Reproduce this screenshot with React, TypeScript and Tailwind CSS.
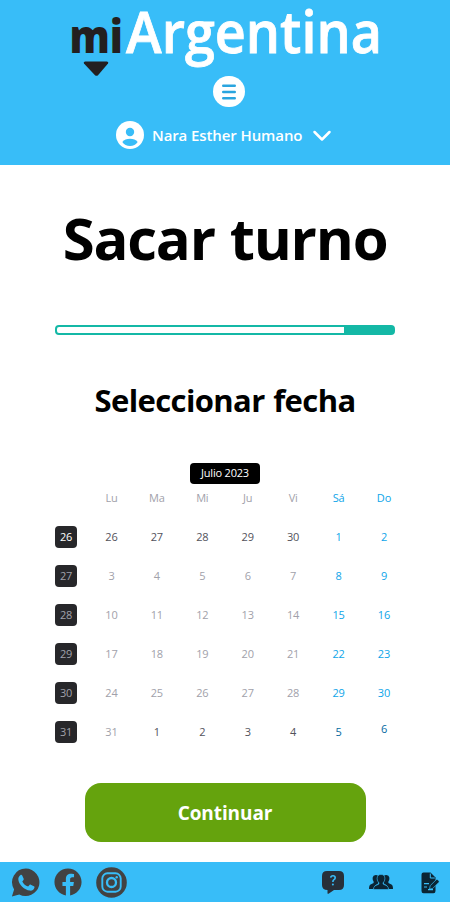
import React from 'react';
import { FaFacebook } from 'react-icons/fa';

const dayNames = ['Lu', 'Ma', 'Mi', 'Ju', 'Vi', 'Sá', 'Do'];
const weeks = [
  { n: 26, days: [26, 27, 28, 29, 30, 1, 2] },
  { n: 27, days: [3, 4, 5, 6, 7, 8, 9] },
  { n: 28, days: [10, 11, 12, 13, 14, 15, 16] },
  { n: 29, days: [17, 18, 19, 20, 21, 22, 23] },
  { n: 30, days: [24, 25, 26, 27, 28, 29, 30] },
  { n: 31, days: [31, 1, 2, 3, 4, 5, 6] },
];

function dayColor(week: number, col: number) {
  if (week === 5 && col > 4) return 'text-[#0369a1]';
  if (col > 4) return 'text-[#0ea5e9]';
  if (week === 0 || (week === 5 && col > 0)) return 'text-[#52525b]';
  return 'text-[#a1a1aa]';
}

function Logo() {
  return (
    <svg width="318" height="76" viewBox="0 0 318 76" className="block overflow-visible" fontFamily="'Open Sans', 'Noto Sans', sans-serif">
      <text x="3.500" y="52.500" fontSize="46" fontWeight="800" fill="#231f20" textLength="53.500" lengthAdjust="spacingAndGlyphs">mi</text>
      <text x="60" y="52.500" fontSize="58" fontWeight="600" fill="#fff" stroke="#fff" strokeWidth="0.800" textLength="256" lengthAdjust="spacingAndGlyphs">Argentina</text>
      <path d="M19 61.500h22q2 .3 1 2L32 75.200q-1.500 1.200-3 0L18 63.500q-1-1.700 1-2z" fill="#231f20" />
    </svg>
  );
}

function UserIcon() {
  return (
    <svg width="28" height="28" viewBox="0 0 28 28" className="shrink-0">
      <circle cx="14" cy="14" r="14" fill="#fff" />
      <circle cx="14" cy="11" r="4.200" fill="#38bdf8" />
      <path d="M6.300 21Q9 17.800 14 17.800t7.700 3.200Q19 25 14 25t-7.700-4z" fill="#38bdf8" />
    </svg>
  );
}

function WhatsappIcon() {
  return (
    <svg width="29" height="29" viewBox="0 0 29 29">
      <path d="M14.800.6a13.700 13.700 0 1 1-6.500 25.800L.9 28.600l2.200-7.200A13.700 13.700 0 0 1 14.800.6z" fill="#424242" />
      <path d="M9.300 7.200c.6-.5 1.500-.5 1.900.2l1.500 3.300c.2.600 0 1-.4 1.500l-1 1.200c1.300 2.500 3.200 4.200 5.800 5.200l1.400-1.700c.4-.4.8-.5 1.300-.2l3.100 1.500c.6.300.7.700.5 1.500-.6 2.100-2.300 3.100-4.500 2.900C13.500 22 7.600 16.400 7.300 11.200c0-1.600.8-3.100 2-4z" fill="#38bdf8" />
    </svg>
  );
}

function InstagramIcon() {
  return (
    <svg width="31" height="31" viewBox="0 0 31 31" fill="none" stroke="#38bdf8">
      <circle cx="15.500" cy="15.500" r="15.300" fill="#424242" stroke="none" />
      <rect x="6.300" y="6.300" width="18.400" height="18.400" rx="5.200" strokeWidth="1.900" />
      <circle cx="15.500" cy="15.500" r="4.500" strokeWidth="2.300" />
      <circle cx="20.700" cy="10.300" r="1.200" fill="#38bdf8" stroke="none" />
    </svg>
  );
}

function HelpIcon() {
  return (
    <svg width="24" height="25" viewBox="0 0 24 25">
      <path d="M6 1h12q5 0 5 5v9q0 5-5 5h-5l-5.500 3.700q-1 .5-1-.8V20Q1 20 1 15V6q0-5 5-5z" fill="#27303a" />
      <path d="M9.700 7.700q.2-2 2.300-2t2.200 2q0 1.200-1.200 1.900-1.200.8-1.100 2.400" fill="none" stroke="#38bdf8" strokeWidth="1.600" />
      <circle cx="11.900" cy="14.600" r="1" fill="#38bdf8" />
    </svg>
  );
}

function PeopleIcon() {
  return (
    <svg width="24" height="16" viewBox="0 0 24 16" fill="#0b2534">
      <path d="M6.700 1q2 0 2.500 1.200-1.500 3 .1 6.300l-.2 1L6 11.400 4.300 15H0q0-4 1.600-4.600l3-1.300V7.500Q3.500 6.500 3.600 3.700 4 1.200 6.700 1zM17.300 1q-2 0-2.500 1.200 1.500 3-.1 6.300l.2 1 3.100 1.900 1.700 3.600H24q0-4-1.600-4.600l-3-1.300V7.500q1.100-1 1-3.800Q20 1.200 17.300 1z" />
      <path d="M12 .5q4 0 3.900 4.200 0 2.600-1.800 4.100v1.300l3.700 1.700q1.700.8 1.700 3.700h-15q0-2.900 1.700-3.700l3.700-1.700V8.800Q8.100 7.300 8.100 4.700q0-4.200 3.900-4.200z" stroke="#38bdf8" strokeWidth=".6" />
    </svg>
  );
}

function DocumentIcon() {
  return (
    <svg width="19" height="22" viewBox="0 0 19 22">
      <path d="M2.500 .5H9.500l5 5V19q0 2.300-2 2.300h-10q-2 0-2-2.300V2.800Q.5.500 2.500.5z" fill="#0b2534" />
      <path d="M9.300 1.500v4.500h4.500" fill="none" stroke="#38bdf8" strokeWidth="1" />
      <path d="M3 11.700h5M3 15h3M7 17.700h5" stroke="#38bdf8" strokeWidth="1.200" />
      <path d="M8.500 17l.7-3.300 6-6q.8-.6 1.600.1l1 1q.8.800 0 1.600l-6 6z" fill="#0b2534" stroke="#38bdf8" strokeWidth=".7" />
    </svg>
  );
}

export default function App() {
  return (
    <div className="flex h-[902px] w-[450px] flex-col bg-white font-['Open_Sans','Noto_Sans',sans-serif]">
      <header className="flex h-[165px] shrink-0 flex-col items-center bg-[#38bdf8]">
        <Logo />
        <button className="ml-2 flex h-[31px] w-8 items-center justify-center rounded-full bg-white" aria-label="Menú">
          <svg width="14" height="16" viewBox="0 0 14 16" stroke="#2aa5df" strokeWidth="2.400" strokeLinecap="round">
            <path d="M1.200 1.700h11.600M1.200 8h11.600M1.200 14.300h11.600" />
          </svg>
        </button>
        <div className="mt-[11px] flex h-[34px] w-[218px] items-center text-white">
          <UserIcon />
          <span className="ml-[8px] w-[151px] whitespace-nowrap text-[15px] font-semibold tracking-[-0.100px]">Nara Esther Humano</span>
          <svg width="20" height="13" viewBox="0 0 20 13" className="ml-[9px] shrink-0" fill="none" stroke="white" strokeWidth="2.500" strokeLinecap="round" strokeLinejoin="round">
            <path d="M2.500 3l7.500 7.500L17.500 3" />
          </svg>
        </div>
      </header>
      <main className="flex flex-1 flex-col items-center text-black">
        <h1 className="mt-[37px] whitespace-nowrap text-[58px] leading-[72px] font-bold tracking-[-1.200px] [word-spacing:1px]">Sacar turno</h1>
        <div className="mt-[51px] flex h-[10px] w-[340px] rounded-[4px] border-2 border-[#14b8a6] bg-[linear-gradient(to_left,#14b8a6_49px,white_49px)]" />
        <h2 className="mt-[45px] whitespace-nowrap text-[31px] leading-10 font-bold tracking-[-0.600px] [word-spacing:1px]">Seleccionar fecha</h2>
        <div className="mt-[43px] flex h-[21px] w-[70px] items-center justify-center rounded-[4px] bg-black text-[11px] font-medium tracking-[-0.200px] whitespace-nowrap text-white">Julio 2023</div>
        <div className="mt-[3px] flex w-[340px] flex-col gap-[17px] text-[11px] leading-[22px] tracking-[-0.200px]">
          <div className="flex justify-between text-center">
            <span className="w-[22px]" />
            {dayNames.map((name, i) => (
              <span key={name} className={`w-[22px] ${i > 4 ? 'text-[#0ea5e9]' : 'text-[#a1a1aa]'}`}>{name}</span>
            ))}
          </div>
          {weeks.map((week, r) => (
            <div key={week.n} className="flex justify-between text-center">
              <span className={`size-[22px] rounded-[4px] bg-[#27272a] ${r === 0 ? 'text-white' : 'text-[#a1a1aa]'}`}>{week.n}</span>
              {week.days.map((day, c) => (
                <span key={c} className={`h-[22px] w-[22px] ${dayColor(r, c)} ${r === 5 && c === 6 ? '-mt-[3px]' : ''}`}>{day}</span>
              ))}
            </div>
          ))}
        </div>
        <button className="mt-10 h-[59px] w-[281px] rounded-2xl bg-[#65a30d] pt-[2px] text-[19px] font-bold tracking-[-0.100px] text-white">Continuar</button>
      </main>
      <footer className="flex h-10 shrink-0 items-center justify-between bg-[#38bdf8] pr-[10px] pl-[11px] text-[#424242]">
        <div className="flex items-center gap-[14px]">
          <WhatsappIcon />
          <FaFacebook size={28} />
          <InstagramIcon />
        </div>
        <div className="flex items-center gap-[24px]">
          <HelpIcon />
          <PeopleIcon />
          <span className="ml-[4px] pt-px"><DocumentIcon /></span>
        </div>
      </footer>
    </div>
  );
}
